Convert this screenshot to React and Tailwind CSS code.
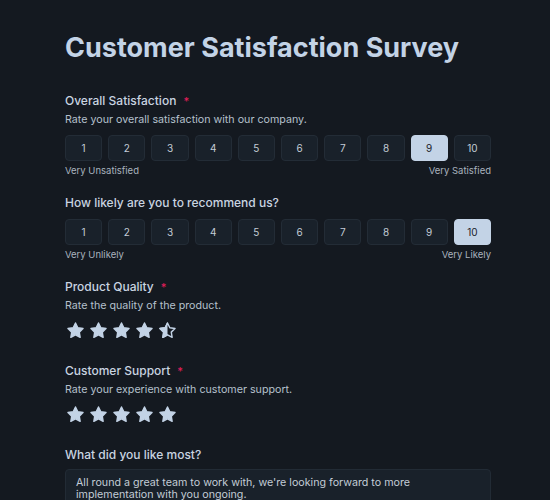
import React from "react";

const STAR = "M12 2.5l2.94 5.96 6.58.96-4.76 4.64 1.12 6.55L12 17.52l-5.88 3.09 1.12-6.55L2.48 9.42l6.58-.96L12 2.5z";

function Star({ type }) {
  if (type === "half") {
    return (
      <svg width="19" height="19" viewBox="0 0 24 24">
        <defs>
          <clipPath id="lefthalf">
            <rect x="0" y="0" width="12" height="24" />
          </clipPath>
        </defs>
        <path d={STAR} fill="none" stroke="#c3d3e6" strokeWidth="1.8" strokeLinejoin="round" />
        <path d={STAR} fill="#c3d3e6" stroke="#c3d3e6" strokeWidth="1.8" strokeLinejoin="round" clipPath="url(#lefthalf)" />
      </svg>
    );
  }
  return (
    <svg width="19" height="19" viewBox="0 0 24 24">
      <path d={STAR} fill="#c3d3e6" stroke="#c3d3e6" strokeWidth="1.8" strokeLinejoin="round" />
    </svg>
  );
}

function Label({ children, required }) {
  return (
    <div className="flex items-center gap-[7px] text-[12px] font-medium leading-[20px] text-[#c9d4e0]">
      <span>{children}</span>
      {required && <span className="text-[#e11d5a] text-[11px] leading-none">*</span>}
    </div>
  );
}

function Desc({ children }) {
  return <div className="text-[10.7px] leading-[18px] text-[#b5c0cc]">{children}</div>;
}

function Scale({ selected, left, right }) {
  const nums = [1, 2, 3, 4, 5, 6, 7, 8, 9, 10];
  return (
    <div>
      <div className="grid grid-cols-10 gap-[6px]">
        {nums.map((n) => (
          <div
            key={n}
            className={
              n === selected
                ? "h-[26px] flex items-center justify-center rounded-[4px] border border-[#c3d3e6] bg-[#c3d3e6] text-[10px] text-[#1a2029]"
                : "h-[26px] flex items-center justify-center rounded-[4px] border border-[#232c36] bg-[#19212a] text-[10px] text-[#c3ccd6]"
            }
          >
            {n}
          </div>
        ))}
      </div>
      <div className="mt-[3px] flex justify-between text-[9.5px] leading-[14px] text-[#a9b3be]">
        <span>{left}</span>
        <span>{right}</span>
      </div>
    </div>
  );
}

export default function App() {
  return (
    <div
      className="min-h-[500px] w-full bg-[#141920] pl-[65px] pr-[59px] pt-[28px] overflow-hidden"
      style={{ fontFamily: "Inter, 'Noto Sans', sans-serif" }}
    >
      <h1 className="text-[27px] font-bold leading-[40px] text-[#c3d3e6]">Customer Satisfaction Survey</h1>

      <div className="mt-[23px]">
        <Label required>Overall Satisfaction</Label>
        <Desc>Rate your overall satisfaction with our company.</Desc>
        <div className="mt-[6px]">
          <Scale selected={9} left="Very Unsatisfied" right="Very Satisfied" />
        </div>
      </div>

      <div className="mt-[15px]">
        <Label>How likely are you to recommend us?</Label>
        <div className="mt-[6px]">
          <Scale selected={10} left="Very Unlikely" right="Very Likely" />
        </div>
      </div>

      <div className="mt-[15px]">
        <Label required>Product Quality</Label>
        <Desc>Rate the quality of the product.</Desc>
        <div className="mt-[6px] flex gap-[4px] pl-[1px]">
          <Star />
          <Star />
          <Star />
          <Star />
          <Star type="half" />
        </div>
      </div>

      <div className="mt-[21px]">
        <Label required>Customer Support</Label>
        <Desc>Rate your experience with customer support.</Desc>
        <div className="mt-[6px] flex gap-[4px] pl-[1px]">
          <Star />
          <Star />
          <Star />
          <Star />
          <Star />
        </div>
      </div>

      <div className="mt-[21px]">
        <Label>What did you like most?</Label>
        <div className="mt-[4px] rounded-[4px] border border-[#222b35] bg-[#19212a] px-[10px] pt-[7px] pb-[10px] text-[10.7px] leading-[12px] text-[#c3ccd6]">
          All round a great team to work with, we're looking forward to more
          <br />
          implementation with you ongoing.
        </div>
      </div>
    </div>
  );
}
